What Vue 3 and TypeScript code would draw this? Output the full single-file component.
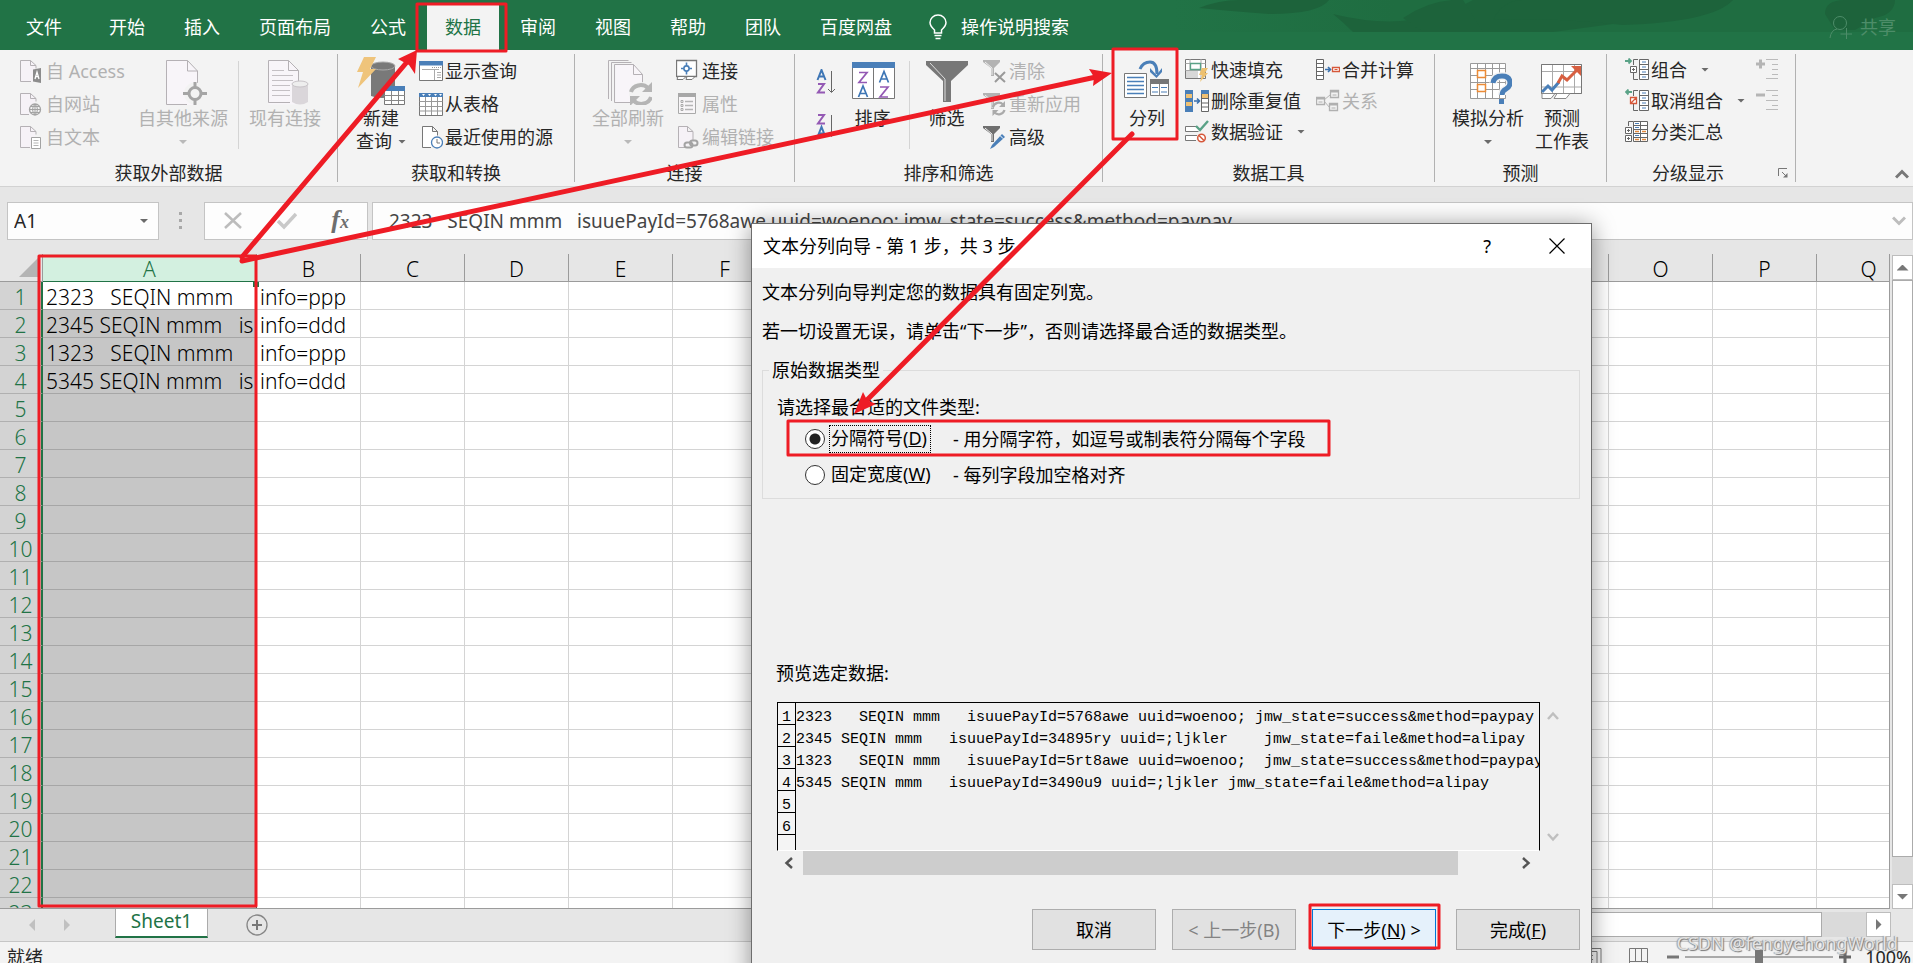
<script setup lang="ts">
import { ref } from 'vue'

interface Tool {
  icon: string
  label: string
  disabled?: boolean
  arrow?: boolean
}

const tabsBefore: string[] = ['开始', '插入', '页面布局', '公式', '数据', '审阅', '视图', '帮助', '团队', '百度网盘']
const activeTab = ref('数据')

const external: Tool[] = [
  { icon: 'access', label: '自 Access', disabled: true },
  { icon: 'web', label: '自网站', disabled: true },
  { icon: 'text', label: '自文本', disabled: true },
]
const transform: Tool[] = [
  { icon: 'showquery', label: '显示查询' },
  { icon: 'fromtable', label: '从表格' },
  { icon: 'recent', label: '最近使用的源' },
]
const connections: Tool[] = [
  { icon: 'conn', label: '连接' },
  { icon: 'props', label: '属性', disabled: true },
  { icon: 'links', label: '编辑链接', disabled: true },
]
const filters: Tool[] = [
  { icon: 'clear', label: '清除', disabled: true },
  { icon: 'reapply', label: '重新应用', disabled: true },
  { icon: 'advanced', label: '高级' },
]
const dataTools: Tool[] = [
  { icon: 'flash', label: '快速填充' },
  { icon: 'dedupe', label: '删除重复值' },
  { icon: 'validate', label: '数据验证', arrow: true },
]
const dataTools2: Tool[] = [
  { icon: 'consolidate', label: '合并计算' },
  { icon: 'relations', label: '关系', disabled: true },
]
const outline: Tool[] = [
  { icon: 'group', label: '组合', arrow: true },
  { icon: 'ungroup', label: '取消组合', arrow: true },
  { icon: 'subtotal', label: '分类汇总' },
]

const columns: string[] = 'ABCDEFGHIJKLMNOPQ'.split('')
const rowCount = 23
const cells: Record<string, string> = {
  A1: '2323   SEQIN mmm',
  A2: '2345 SEQIN mmm   is',
  A3: '1323   SEQIN mmm',
  A4: '5345 SEQIN mmm   is',
  B1: 'info=ppp',
  B2: 'info=ddd',
  B3: 'info=ppp',
  B4: 'info=ddd',
}
const nameBox = ref('A1')
const formula = ref('2323   SEQIN mmm   isuuePayId=5768awe uuid=woenoo; jmw_state=success&method=paypay')
const fileType = ref('delimited')
const zoom = ref(50)

const preview: string[] = [
  '2323   SEQIN mmm   isuuePayId=5768awe uuid=woenoo; jmw_state=success&method=paypay',
  '2345 SEQIN mmm   isuuePayId=34895ry uuid=;ljkler    jmw_state=faile&method=alipay',
  '1323   SEQIN mmm   isuuePayId=5rt8awe uuid=woenoo;  jmw_state=success&method=paypay',
  '5345 SEQIN mmm   isuuePayId=3490u9 uuid=;ljkler jmw_state=faile&method=alipay',
  '',
  '',
]
</script>

<template>
  <svg class="sprite" aria-hidden="true">
    <symbol id="i-access" viewBox="0 0 24 24">
      <path d="M1 1.500h9l5 5v16H1z" fill="#f6f2f7" /><path d="M11 22.500H.5v-21h10l5.500 5v3M10.500 1.500v5H16" fill="none" stroke="#b5b1b5" />
      <path d="M13 10.500l8-1.500v15l-8-1.500z" fill="#8c8c8c" /><path d="M15 20l2-7 2 7m-3.200-2.300h2.500" fill="none" stroke="#fff" stroke-width="1.300" />
    </symbol>
    <symbol id="i-web" viewBox="0 0 24 24">
      <path d="M1 1.500h9l5 5v16H1z" fill="#f6f2f7" /><path d="M9 22.500H.5v-21h10l5.500 5v3M10.500 1.500v5H16" fill="none" stroke="#b5b1b5" />
      <circle cx="15" cy="17.500" r="5.500" fill="#f3f3f3" stroke="#a3a3a3" stroke-width="1.300" /><path d="M15 12v11M9.500 17.500h11M10.500 14.500h9M10.500 20.500h9M15 12q-5 5.500 0 11q5-5.500 0-11" fill="none" stroke="#a3a3a3" />
    </symbol>
    <symbol id="i-text" viewBox="0 0 24 24">
      <path d="M1 1.500h9l5 5v16H1z" fill="#f6f2f7" /><path d="M10 22.500H.5v-21h10l5.500 5v3M10.500 1.500v5H16" fill="none" stroke="#b5b1b5" />
      <path d="M11.500 12.500h9v11h-9z" fill="#fff" stroke="#a3a3a3" /><path d="M13.500 15.500h5M13.500 18h5M13.500 20.500h5" stroke="#b5b5b5" />
    </symbol>
    <symbol id="i-showquery" viewBox="0 0 24 24">
      <path d="M.5 2.500h23v19H.5z" fill="#fff" stroke="#777" /><path d="M0 2h24v4.500H0z" fill="#4a7fb8" />
      <path d="M15.500 11v10M18 13.500h4M18 16h4M18 18.500h4M3 10.500h17" fill="none" stroke="#aaa" /><path d="M13 8.500h9" stroke="#999" stroke-dasharray="1 1" />
    </symbol>
    <symbol id="i-fromtable" viewBox="0 0 24 24">
      <path d="M.5 1.500h23v22H.5z" fill="#fff" stroke="#777" /><path d="M.5 9.500h23M.5 14.500h23M.5 19h23M6.500 4v19M12.500 4v19M18.500 4v19" stroke="#999" fill="none" />
      <path d="M0 1h24v4H0z" fill="#4a7fb8" /><path d="M3 2h3l-1.500 2zM9 2h3l-1.500 2zM15 2h3l-1.500 2zM20 2h3l-1.500 2z" fill="#fff" />
    </symbol>
    <symbol id="i-recent" viewBox="0 0 24 24">
      <path d="M12 22.500H3.500v-21h10l5 5v4M13.500 1.500v5h5" fill="#fff" stroke="#777" />
      <circle cx="18" cy="17.500" r="5.500" fill="#fff" stroke="#4a7fb8" stroke-width="1.300" /><path d="M18 14v4h3" fill="none" stroke="#777" />
    </symbol>
    <symbol id="i-conn" viewBox="0 0 24 24">
      <path d="M.5 1.500h20v16H.5z" fill="#fff" stroke="#777" stroke-width="1.300" /><path d="M2 17.500h8l-3 3H1zM11 17.500h8l-3 3h-6z" fill="#fff" stroke="#777" />
      <path d="M10.500 3.500v12M5 9.500h11" stroke="#4a7fb8" stroke-width="1.600" /><circle cx="10.500" cy="9.500" r="2.600" fill="#fff" stroke="#4a7fb8" stroke-width="1.600" />
    </symbol>
    <symbol id="i-props" viewBox="0 0 24 24">
      <path d="M2.500 1.500h17v20h-17z" fill="#f8f6f8" stroke="#aaa" /><path d="M2 1h18v4H2z" fill="#a8a8a8" />
      <path d="M9 9.500h8M9 13.500h8M9 17.500h8" stroke="#b5b5b5" stroke-width="1.300" /><path d="M5 8.500h2v2H5zM5 12.500h2v2H5zM5 16.500h2v2H5z" fill="none" stroke="#aaa" />
    </symbol>
    <symbol id="i-links" viewBox="0 0 24 24">
      <path d="M9 22.500H2.500v-21h9l5.500 5v9M11.500 1.500v5H17" fill="#f6f2f7" stroke="#b5b1b5" />
      <g fill="none" stroke="#a3a3a3" stroke-width="2"><rect x="8.500" y="17.500" width="8" height="5" rx="2.500" /><rect x="14" y="15.500" width="7.500" height="5" rx="2.500" /></g>
    </symbol>
    <symbol id="i-clear" viewBox="0 0 24 24">
      <path d="M0 1h17v2l-6 6v8H8V9L0 3z" fill="#b3b3b3" /><path d="M2 3l7 6v7" fill="none" stroke="#eee" /><path d="M12 14l10 9M22 13l-10 10" stroke="#999" stroke-width="2" />
    </symbol>
    <symbol id="i-reapply" viewBox="0 0 24 24">
      <path d="M0 1h17v2l-6 6v8H8V9L0 3z" fill="#b3b3b3" /><path d="M2 3l7 6v7" fill="none" stroke="#eee" />
      <path d="M10 15a6 6 0 0 1 10-2.500M21.500 18a6 6 0 0 1-10 2.500" fill="none" stroke="#aaa" stroke-width="2.300" /><path d="M22 9v6h-6zM9.500 24v-6h6z" fill="#aaa" />
    </symbol>
    <symbol id="i-advanced" viewBox="0 0 24 24">
      <path d="M0 1h17v2l-6 6v8H8V9L0 3z" fill="#6f6f6f" /><path d="M2 3l7 6v7" fill="none" stroke="#eee" /><path d="M7 24l2-4L19 9l3 3L11 22z" fill="#4a7fb8" /><path d="M17 10.500l3.200 3.200" stroke="#fff" />
    </symbol>
    <symbol id="i-flash" viewBox="0 0 24 24">
      <path d="M.5 1.500h20v19H.5z" fill="#fff" stroke="#777" /><path d="M.5 5.500h20M.5 12.500h20M5 1v19M16 1v19" stroke="#aaa" /><path d="M1 13h12v7H1z" fill="#d8d8d8" />
      <path d="M5.500 5.500h10v6h-10z" fill="#fff" stroke="#5aa287" stroke-width="1.300" /><path d="M17 10h6l-3 5h3l-8 9 2-7h-3z" fill="#edc06f" />
    </symbol>
    <symbol id="i-dedupe" viewBox="0 0 24 24">
      <path d="M0 1h8v22H0z" fill="#4a7fb8" /><path d="M1 5h6v4H1zM1 13h6v4H1z" fill="#f0c173" />
      <path d="M16.500 1.500h7v21h-7zM16 9.500h8M16 14h8M16 18h8" fill="#fff" stroke="#666" /><path d="M16 1h8v4h-8z" fill="#4a7fb8" /><path d="M17 5h6v4h-6z" fill="#f0c173" />
      <path d="M9 12h5M12 9.500l2.500 2.500-2.500 2.500" fill="none" stroke="#3a70ad" stroke-width="1.600" />
    </symbol>
    <symbol id="i-validate" viewBox="0 0 24 24">
      <path d="M12 6.500H.5v5h13M12 15.500H.5v5H11" fill="#fff" stroke="#777" /><path d="M11 6l4 4 8-9" fill="none" stroke="#5aa287" stroke-width="2.400" />
      <circle cx="16.500" cy="18" r="3.800" fill="#fff" stroke="#d6583a" stroke-width="1.500" /><path d="M14 15.500l5 5" stroke="#d6583a" stroke-width="1.500" />
    </symbol>
    <symbol id="i-consolidate" viewBox="0 0 24 24">
      <path d="M.5 1.500h7v20h-7zM.5 5.500h7M.5 9.500h7M.5 13.500h7M.5 17.500h7" fill="#fff" stroke="#666" />
      <path d="M9 11.500h5M12 9l2.500 2.500-2.500 2.500" fill="none" stroke="#3a70ad" stroke-width="1.600" /><path d="M16.500 9.500h7v4h-7z" fill="#fff" stroke="#d6583a" stroke-width="1.300" /><path d="M18.500 11.500h3" stroke="#d6583a" />
    </symbol>
    <symbol id="i-relations" viewBox="0 0 24 24">
      <path d="M8 11l6-5M8 12l6 7" stroke="#b5b5b5" /><g fill="#f3f3f3" stroke="#b0b0b0" stroke-width="1.300"><path d="M.5 8.500h8v7h-8zM14.500 1.500h8v7h-8zM13.500 14.500h8v7h-8z" /></g>
      <path d="M0 8h9v2.500H0zM14 1h9v2.500h-9zM13 14h9v2.500h-9z" fill="#b0b0b0" /><path d="M2.500 13h4M16.500 6h4M15.500 19h4" stroke="#b0b0b0" />
    </symbol>
    <symbol id="i-group" viewBox="0 0 24 24">
      <path d="M14.500 1.500h9v20h-9zM14 6.500h10M14 11.500h10M14 16.500h10" fill="#fff" stroke="#666" /><path d="M17 4h4M17 9h4M17 14h4M17 19h4" stroke="#4a7fb8" stroke-width="1.200" />
      <path d="M13 1.500H8.500V7M8.500 15v6.500H13" fill="none" stroke="#666" /><path d="M5.500 8.500h6v6h-6zM7 11.500h3M8.500 10v3" fill="#fff" stroke="#666" />
      <path d="M0 3h6M3.500 .5L6 3 3.500 5.500" fill="none" stroke="#5aa287" stroke-width="1.800" />
    </symbol>
    <symbol id="i-ungroup" viewBox="0 0 24 24">
      <path d="M14.500 1.500h9v20h-9zM14 6.500h10M14 11.500h10M14 16.500h10" fill="#fff" stroke="#666" /><path d="M17 4h4M17 9h4M17 14h4M17 19h4" stroke="#4a7fb8" stroke-width="1.200" />
      <path d="M13 1.500H8.500V7M8.500 15v6.500H13" fill="none" stroke="#666" /><path d="M5.500 8.500h6v6h-6zM6 14l5-5" fill="#fff" stroke="#d6583a" stroke-width="1.300" />
      <path d="M7 3H1M3.500 .5L1 3l2.500 2.500" fill="none" stroke="#5aa287" stroke-width="1.800" />
    </symbol>
    <symbol id="i-subtotal" viewBox="0 0 24 24">
      <path d="M8.500 1.500h14v20h-14zM8 5.500h15M8 9.500h15M8 13.500h15M8 17.500h15M15.500 1v21" fill="#fff" stroke="#666" /><path d="M10 3.500h4M10 7.500h4M10 15.500h4" stroke="#4a7fb8" stroke-width="1.200" />
      <path d="M10 11.500h4M17 11.500h4M10 19.500h4M17 19.500h4" stroke="#e58a3c" stroke-width="1.400" /><path d="M8 1.500H3.500V6" fill="none" stroke="#666" />
      <path d="M.5 7.500h6v6h-6zM2 10.500h3M3.500 9v3M.5 15.500h6v6h-6zM2 18.500h3M3.500 17v3" fill="#fff" stroke="#666" />
    </symbol>

    <symbol id="i-othersource" viewBox="0 0 48 48">
      <path d="M7.500 3.500h20l11 11v34h-31z" fill="#f8f5f9" stroke="none" /><path d="M28 47.500H7.500v-44h21L38.500 14v15M28.500 3.500V14h10" fill="none" stroke="#b5b1b5" />
      <circle cx="36" cy="36.500" r="11" fill="#f3f3f3" /><circle cx="36" cy="36.500" r="6" fill="none" stroke="#a5a5a5" stroke-width="3" /><path d="M36 25v7M36 41v8M24 36.500h7M41 36.500h7" stroke="#a5a5a5" stroke-width="3" />
    </symbol>
    <symbol id="i-existing" viewBox="0 0 48 48">
      <path d="M7.500 3.500h20l10 10v34h-30z" fill="#f8f5f9" stroke="none" /><path d="M29 45.500H7.500v-42h20l10 10v11M27.500 3.500v10h10" fill="none" stroke="#b5b1b5" />
      <path d="M11 13.500h12M11 18.500h21M11 23.500h21M11 28.500h18M11 33.500h18M11 38.500h18" stroke="#c4c0c4" /><path d="M31 27v18q8 5 16 0V27z" fill="#dad6da" /><ellipse cx="39" cy="27" rx="8" ry="3" fill="#eee" stroke="#c8c4c8" />
    </symbol>
    <symbol id="i-newquery" viewBox="0 0 48 48">
      <path d="M14 9v30q10 4 24 0V9z" fill="#797979" /><ellipse cx="26" cy="9" rx="12" ry="4" fill="#797979" stroke="#aaa" />
      <path d="M7 0h12l-6 12h6L1 31l5-16H0z" fill="#efc47b" /><path d="M27.500 29.500h20v18h-20z" fill="#fff" stroke="#777" /><path d="M27 29h21v5H27z" fill="#4a7fb8" /><path d="M27 38.500h21M27 43.500h21M34.500 34v13M41.500 34v13" stroke="#888" />
    </symbol>
    <symbol id="i-refresh" viewBox="0 0 48 48">
      <path d="M4.500 42V3.500h20M7.500 44V5.500h20" fill="none" stroke="#b5b1b5" /><path d="M11.500 7.500h19l8 10v28h-27z" fill="#f8f5f9" /><path d="M26 45.500H10.500v-38h19l9 10V26M29.500 7.500v10h9" fill="none" stroke="#b5b1b5" />
      <circle cx="37" cy="37" r="12" fill="#f3f3f3" /><path d="M27 35a10 9 0 0 1 17-4M47 40a10 9 0 0 1-17 4" fill="none" stroke="#b5b5b5" stroke-width="4" /><path d="M48 25v10H38zM26 49V39h10z" fill="#b5b5b5" />
    </symbol>
    <symbol id="i-sort" viewBox="0 0 48 48">
      <path d="M3.500 8.500h42v33h-42z" fill="#fff" stroke="#777" /><path d="M3 5h43v6H3z" fill="#4a7fb8" /><path d="M24.500 11v31" stroke="#777" />
      <g fill="none" stroke-width="1.700"><path d="M10 15.500h8l-8 10h8M31 30h8l-8 10h8" stroke="#9459b4" /><path d="M9.500 40l4.500-11 4.500 11m-7-3.500h5M30.500 25.500l4.500-11 4.500 11m-7-3.500h5" stroke="#3e76b5" /></g>
    </symbol>
    <symbol id="i-filter" viewBox="0 0 48 48">
      <path d="M3 4h42v4L28 24v21h-8V24L3 8z" fill="#777" /><path d="M7 6l15 16v22" fill="none" stroke="#ddd" />
    </symbol>
    <symbol id="i-split" viewBox="0 0 48 48">
      <path d="M1.500 16.500h22v24h-22z" fill="#fff" stroke="#777" /><path d="M4 20.500h17M4 24.500h17M4 28.500h17M4 32.500h17M4 36.500h17" stroke="#4a7fb8" stroke-width="1.300" />
      <path d="M27.500 22.500h18v16h-18z" fill="#fff" stroke="#777" /><path d="M27 22h19v5H27z" fill="#777" /><path d="M36.500 27v11" stroke="#888" /><path d="M29 30.500h6M29 35h6M38 30.500h6M38 35h6" stroke="#4a7fb8" stroke-width="1.200" />
      <path d="M17 12q3-7 10-7 7 0 7 12" fill="none" stroke="#4a7fb8" stroke-width="3" /><path d="M27 11l6.500 7 5.500-7v4l-5.500 6-6.500-6z" fill="#4a7fb8" />
    </symbol>
    <symbol id="i-whatif" viewBox="-3 0 48 48">
      <path d="M3.500 6.500h35v35h-35zM3.500 11.500h35M3.500 18.500h35M3.500 25.500h35M3.500 32.500h35M10.500 6v36M18.500 6v36M25.500 6v36M32.500 6v36" fill="#fff" stroke="#9a9a9a" />
      <path d="M10.500 13.500h8v7h-8zM10.500 27.500h8v7h-8z" fill="#fff" stroke="#eb8b37" stroke-width="1.500" /><path d="M26 26q1-7 9-7 8 0 8 7 0 4-4 6-4 2-4 6" fill="none" stroke="#f3f3f3" stroke-width="8" />
      <path d="M26 26q1-7 9-7 8 0 8 7 0 4-4 6-4 2-4 6" fill="none" stroke="#4a7fb8" stroke-width="5" /><path d="M32 42h5v5h-5z" fill="#4a7fb8" />
    </symbol>
    <symbol id="i-forecast" viewBox="0 0 48 48">
      <path d="M3.500 7.500h40v29h-40zM3.500 14.500h40M3.500 30h40M14.500 8v28M25.500 8v28M36.500 8v28" fill="#fff" stroke="#aaa" /><path d="M3.500 7.500h40v29h-40z" fill="none" stroke="#777" />
      <path d="M4 36.500h13l-4 5H4zM19 36.500h13l-4 5h-12z" fill="#fff" stroke="#888" /><path d="M4 35l6-6 4 4 7-8" fill="none" stroke="#4a7fb8" stroke-width="3" /><path d="M20 26l4-7 5 4 11-11" fill="none" stroke="#d75f41" stroke-width="3" /><path d="M33 9h10v10l-3-3-5-5z" fill="#d75f41" />
    </symbol>
  </svg>

  <div class="app">
    <header class="tabbar">
      <svg class="pattern" width="740" height="32" aria-hidden="true">
        <defs><linearGradient id="fade"><stop offset="0" stop-color="#217346" /><stop offset=".3" stop-color="#1f6d41" /></linearGradient></defs>
        <rect width="740" height="32" fill="url(#fade)" />
        <g fill="#1d633b">
          <path d="M26 8q20-8 40-8h90q-10 14-60 14-40-3-70-6z" /><path d="M160 14q80 20 140-14h150q60 12-10 24l-60 8H180q-10-10-20-18z" />
          <path d="M230 18q30-20 60-18l20 32h-60z" /><path d="M320 20q10-20 30-20h210q-20 22-110 25-70-8-130-5z" /><path d="M652 14q0-14 20-14h50q0 14-20 18l-20 12h-20z" />
        </g>
      </svg>
      <nav class="tabs">
        <button class="tab file">文件</button>
        <button v-for="t in tabsBefore" :key="t" class="tab" :class="{ active: t === activeTab }" @click="activeTab = t">{{ t }}</button>
      </nav>
      <button class="tell">
        <svg width="18" height="26" viewBox="0 0 18 26"><path d="M5.500 19v-3Q1 12 1 8.500a8 7.500 0 0 1 16 0Q17 12 12.500 16v3zM5.500 21.500h7M6.500 24.500h5" fill="none" stroke="#fff" stroke-width="1.500" /></svg>
        操作说明搜索
      </button>
      <button class="share">
        <svg width="24" height="24" viewBox="0 0 24 24"><circle cx="11" cy="8" r="6.500" fill="none" stroke="currentColor" /><path d="M1 23q1-8 7-9m3.500 5H23M17.500 13v11" fill="none" stroke="currentColor" /></svg>
        共享
      </button>
    </header>

    <section class="ribbon">
      <div class="group g1">
        <div class="body">
          <div class="stack">
            <button v-for="b in external" :key="b.icon" class="small" :disabled="b.disabled"><svg class="i24"><use :href="'#i-' + b.icon" /></svg>{{ b.label }}</button>
          </div>
          <button class="big" disabled><svg class="i48"><use href="#i-othersource" /></svg><span>自其他来源</span><i class="caret"></i></button>
          <i class="sep"></i>
          <button class="big" disabled><svg class="i48"><use href="#i-existing" /></svg><span>现有连接</span></button>
        </div>
        <div class="label">获取外部数据</div>
      </div>
      <div class="group g2">
        <div class="body">
          <button class="big"><svg class="i48"><use href="#i-newquery" /></svg><span>新建</span><span class="with-caret">查询<i class="caret"></i></span></button>
          <div class="stack">
            <button v-for="b in transform" :key="b.icon" class="small"><svg class="i24"><use :href="'#i-' + b.icon" /></svg>{{ b.label }}</button>
          </div>
        </div>
        <div class="label">获取和转换</div>
      </div>
      <div class="group g3">
        <div class="body">
          <button class="big" disabled><svg class="i48"><use href="#i-refresh" /></svg><span>全部刷新</span><i class="caret"></i></button>
          <div class="stack">
            <button v-for="b in connections" :key="b.icon" class="small" :disabled="b.disabled"><svg class="i24"><use :href="'#i-' + b.icon" /></svg>{{ b.label }}</button>
          </div>
        </div>
        <div class="label">连接</div>
      </div>
      <div class="group g4">
        <div class="body">
          <div class="sorts">
            <button aria-label="升序"><svg width="20" height="26" viewBox="0 0 20 26" fill="none"><path d="M1.500 11l4-10 4 10m-6.500-3.500h5" stroke="#3e76b5" stroke-width="2" /><path d="M2 15h6l-6 8.500h7" stroke="#9459b4" stroke-width="2" /><path d="M15.500 2v21M12 20l3.500 3.500L19 20" stroke="#666" /></svg></button>
            <button aria-label="降序"><svg width="20" height="26" viewBox="0 0 20 26" fill="none"><path d="M2 2h6l-6 8.500h7" stroke="#9459b4" stroke-width="2" /><path d="M1.500 24l4-10 4 10m-6.500-3.500h5" stroke="#3e76b5" stroke-width="2" /><path d="M15.500 2v21M12 20l3.500 3.500L19 20" stroke="#666" /></svg></button>
          </div>
          <button class="big"><svg class="i48"><use href="#i-sort" /></svg><span>排序</span></button>
          <i class="sep"></i>
          <button class="big"><svg class="i48"><use href="#i-filter" /></svg><span>筛选</span></button>
          <div class="stack">
            <button v-for="b in filters" :key="b.icon" class="small" :disabled="b.disabled"><svg class="i24"><use :href="'#i-' + b.icon" /></svg>{{ b.label }}</button>
          </div>
        </div>
        <div class="label">排序和筛选</div>
      </div>
      <div class="group g5">
        <div class="body">
          <button class="big"><svg class="i48"><use href="#i-split" /></svg><span>分列</span></button>
          <div class="stack tight">
            <button v-for="b in dataTools" :key="b.icon" class="small"><svg class="i24"><use :href="'#i-' + b.icon" /></svg>{{ b.label }}<i v-if="b.arrow" class="caret"></i></button>
          </div>
          <div class="stack tight">
            <button v-for="b in dataTools2" :key="b.icon" class="small" :disabled="b.disabled"><svg class="i24"><use :href="'#i-' + b.icon" /></svg>{{ b.label }}</button>
          </div>
        </div>
        <div class="label">数据工具</div>
      </div>
      <div class="group g6">
        <div class="body">
          <button class="big"><svg class="i48"><use href="#i-whatif" /></svg><span>模拟分析</span><i class="caret"></i></button>
          <button class="big"><svg class="i48"><use href="#i-forecast" /></svg><span>预测</span><span>工作表</span></button>
        </div>
        <div class="label">预测</div>
      </div>
      <div class="group g7">
        <div class="body">
          <div class="stack tight">
            <button v-for="b in outline" :key="b.icon" class="small"><svg class="i24"><use :href="'#i-' + b.icon" /></svg>{{ b.label }}<i v-if="b.arrow" class="caret"></i></button>
          </div>
          <div class="stack tight detail">
            <button class="small" disabled aria-label="显示明细数据"><svg class="i24" viewBox="0 0 24 24"><path d="M0 6h9M4.500 1.500v9" stroke="#b5b5b5" stroke-width="3" /><path d="M10 1.500h12M16 6.500h6M16 11.500h6M16 16.500h6M10 20.500h12" stroke="#bbb" /></svg></button>
            <button class="small" disabled aria-label="隐藏明细数据"><svg class="i24" viewBox="0 0 24 24"><path d="M0 6h9" stroke="#b5b5b5" stroke-width="3" /><path d="M10 1.500h12M16 6.500h6M10 11.500h12M16 16.500h6M10 20.500h12" stroke="#bbb" /></svg></button>
          </div>
        </div>
        <div class="label launch">分级显示<button class="launcher" aria-label="分级显示设置"><svg width="10" height="10" viewBox="0 0 10 10"><path d="M.5 8V.5H9M4 4l4 4" fill="none" stroke="#777" /><path d="M9.500 5v4.500H5z" fill="#777" /></svg></button></div>
      </div>
      <button class="collapse" aria-label="折叠功能区"><svg width="14" height="10" viewBox="0 0 14 10"><path d="M1 8.500l6-6 6 6" fill="none" stroke="#777" stroke-width="3" /></svg></button>
    </section>

    <section class="formulabar">
      <div class="namebox"><input v-model="nameBox" aria-label="名称框" /><i class="caret"></i></div>
      <div class="dots"><i></i><i></i><i></i></div>
      <div class="fxbox">
        <button aria-label="取消输入"><svg width="20" height="18" viewBox="0 0 20 18"><path d="M2 1l16 15M18 1L2 16" stroke="#bcbcbc" stroke-width="2.500" /></svg></button>
        <button aria-label="输入"><svg width="20" height="18" viewBox="0 0 20 18"><path d="M1 9l6 6L19 2" fill="none" stroke="#c9c9c9" stroke-width="3.500" /></svg></button>
        <button class="fx" aria-label="插入函数"><i>f</i><i class="x">x</i></button>
      </div>
      <div class="formula">
        <input v-model="formula" aria-label="编辑栏" />
        <svg width="14" height="10" viewBox="0 0 14 10"><path d="M1 1.500l6 6 6-6" fill="none" stroke="#bdbdbd" stroke-width="3" /></svg>
      </div>
    </section>

    <main class="sheet">
      <div class="gridwrap">
        <table>
          <colgroup><col class="c-head" /><col class="c-a" /><col v-for="c in columns.slice(1)" :key="c" class="c-n" /></colgroup>
          <thead>
            <tr>
              <th class="corner"><svg width="19" height="19" viewBox="0 0 19 19"><path d="M19 0v19H0z" fill="#b4b4b4" /></svg></th>
              <th v-for="c in columns" :key="c" :class="{ sel: c === 'A' }">{{ c }}</th>
            </tr>
          </thead>
          <tbody>
            <tr v-for="r in rowCount" :key="r">
              <th>{{ r }}</th>
              <td v-for="c in columns" :key="c" :class="{ sel: c === 'A', cur: c + r === 'A1' }">{{ cells[c + r] }}</td>
            </tr>
          </tbody>
        </table>
        <i class="handle"></i>
      </div>
      <div class="vscroll">
        <button aria-label="向上滚动"><i class="tri up"></i></button>
        <div class="track"><div class="thumb"></div></div>
        <button aria-label="向下滚动"><i class="tri down"></i></button>
      </div>
    </main>

    <footer class="sheetbar">
      <button class="nav" aria-label="上一个工作表"><i class="tri left"></i></button>
      <button class="nav" aria-label="下一个工作表"><i class="tri right"></i></button>
      <button class="sheettab">Sheet1</button>
      <button class="add" aria-label="新工作表"><svg width="22" height="22" viewBox="0 0 22 22"><circle cx="11" cy="11" r="10" fill="none" stroke="#868686" stroke-width="1.300" /><path d="M6 11h10M11 6v10" stroke="#777" stroke-width="2" /></svg></button>
      <div class="hscroll"><div class="hthumb"></div><div class="htrack"></div><button aria-label="向右滚动"><i class="tri right"></i></button></div>
    </footer>
    <div class="status">
      <span>就绪</span>
      <div class="zoombar">
        <svg width="26" height="20" viewBox="0 0 26 20"><path d="M1 1.500h23v22H1M1 4.500h19v19M1 8.500h15M1 12.500h15M1 16.500h15" fill="none" stroke="#777" /></svg>
        <svg class="brk" width="20" height="20" viewBox="0 0 20 20"><path d="M.5 24V1.500h18V24M6.500 1v13M12.500 1v13M0 14.500h19" fill="none" stroke="#777" /></svg>
        <button aria-label="缩小"><svg width="12" height="12" viewBox="0 0 12 12"><path d="M0 6h12" stroke="#777" stroke-width="3" /></svg></button>
        <input v-model="zoom" type="range" min="0" max="100" aria-label="显示比例" />
        <button aria-label="放大"><svg width="12" height="12" viewBox="0 0 12 12"><path d="M0 6h12M6 0v12" stroke="#666" stroke-width="3" /></svg></button>
        <span class="pct">100%</span>
      </div>
    </div>

    <div class="dialog" role="dialog" aria-labelledby="dlg-title">
      <div class="titlebar">
        <span id="dlg-title">文本分列向导 - 第 1 步，共 3 步</span>
        <button class="help">?</button>
        <button aria-label="关闭"><svg width="16" height="16" viewBox="0 0 16 16"><path d="M.5 .5l15 15M15.500 .5l-15 15" stroke="#000" stroke-width="1.200" /></svg></button>
      </div>
      <div class="content">
        <p>文本分列向导判定您的数据具有固定列宽。</p>
        <p>若一切设置无误，请单击“下一步”，否则请选择最合适的数据类型。</p>
        <fieldset>
          <legend>原始数据类型</legend>
          <p class="prompt">请选择最合适的文件类型:</p>
          <div class="option">
            <input id="opt-d" v-model="fileType" type="radio" name="ftype" value="delimited" />
            <label for="opt-d" class="focus">分隔符号(<u>D</u>)</label>
            <span>- 用分隔字符，如逗号或制表符分隔每个字段</span>
          </div>
          <div class="option">
            <input id="opt-w" v-model="fileType" type="radio" name="ftype" value="fixed" />
            <label for="opt-w">固定宽度(<u>W</u>)</label>
            <span>- 每列字段加空格对齐</span>
          </div>
        </fieldset>
        <p class="pvlabel">预览选定数据:</p>
        <div class="pv">
          <div class="pvbox">
            <div v-for="(line, i) in preview" :key="i" class="pvrow"><b>{{ i + 1 }}</b><span>{{ line }}</span></div>
            <div class="pvrow"><b></b><span></span></div>
          </div>
          <div class="pvv">
            <svg width="12" height="10" viewBox="0 0 12 10"><path d="M1 8l5-5.500L11 8" fill="none" stroke="#bfbfbf" stroke-width="2.500" /></svg>
            <svg width="12" height="10" viewBox="0 0 12 10"><path d="M1 2l5 5.500L11 2" fill="none" stroke="#bfbfbf" stroke-width="2.500" /></svg>
          </div>
        </div>
        <div class="pvh">
          <svg width="10" height="12" viewBox="0 0 10 12"><path d="M8 1L2.500 6 8 11" fill="none" stroke="#555" stroke-width="2.500" /></svg>
          <div class="bar"></div>
          <svg width="10" height="12" viewBox="0 0 10 12"><path d="M2 1l5.500 5L2 11" fill="none" stroke="#555" stroke-width="2.500" /></svg>
        </div>
        <div class="actions">
          <button>取消</button>
          <button disabled>&lt; 上一步(B)</button>
          <button class="primary">下一步(<u>N</u>) &gt;</button>
          <button>完成(<u>F</u>)</button>
        </div>
      </div>
    </div>

    <svg class="marks" aria-hidden="true">
      <g fill="none" stroke="#ee1c25" stroke-width="3" stroke-linejoin="round">
        <rect x="417" y="4" width="89" height="47" /><rect x="1113" y="49" width="64" height="90" /><rect x="39" y="256" width="217" height="650" />
        <rect x="788" y="421" width="541" height="34" /><rect x="1310" y="905" width="129" height="43" />
      </g>
      <g stroke="#ee1c25" stroke-width="5" stroke-linecap="round"><path d="M242 257L407 62" /><path d="M242 261L1096 77" /><path d="M1132 134L867 400" /></g>
      <g fill="#ee1c25"><path d="M417 50l-2 24-6-9-11-6z" /><path d="M1112 73l-19 13 1-9-5-8z" /><path d="M854 414l9-22 4 8 9 4z" /></g>
    </svg>
    <div class="mark-text">CSDN @fengyehongWorld</div>
  </div>
</template>

<style>
html,
body {
  margin: 0;
  overflow: hidden;
}
</style>

<style scoped>
* {
  box-sizing: border-box;
}
.sprite {
  position: absolute;
  width: 0;
  height: 0;
}
.app {
  position: relative;
  display: flex;
  flex-direction: column;
  height: 100vh;
  overflow: hidden;
  background: #e6e6e6;
  color: #262626;
  font-family: "Noto Sans", "Noto Sans CJK SC", sans-serif;
  font-size: 18px;
  line-height: 24px;
}
button,
input {
  margin: 0;
  padding: 0;
  border: 0;
  background: none;
  color: inherit;
  font: inherit;
}
button {
  white-space: nowrap;
}
svg {
  flex: none;
  display: block;
}
p {
  margin: 0;
}
.tabbar {
  position: relative;
  flex: none;
  display: flex;
  height: 50px;
  background: #217346;
  color: #fff;
}
.pattern {
  position: absolute;
  top: 0;
  right: 0;
}
.tabs {
  display: flex;
  gap: 3px;
  padding-top: 5px;
}
.tab {
  height: 45px;
  padding: 0 18px 2px;
}
.tab.file {
  width: 88px;
}
.tab.active {
  background: #f3f3f3;
  color: #217346;
}
.tab,
.tell,
.share {
  line-height: 34px;
}
.tell,
.share {
  position: relative;
  display: flex;
  align-items: center;
  height: 44px;
}
.tell {
  gap: 14px;
  margin-left: 19px;
  padding-top: 9px;
}
.share {
  gap: 7px;
  margin-left: auto;
  margin-right: 17px;
  padding-top: 10px;
  color: #4d8d69;
}
.ribbon {
  flex: none;
  display: flex;
  align-items: flex-start;
  height: 137px;
  padding-top: 4px;
  background: #f3f3f3;
  border-bottom: 1px solid #d2d2d2;
}
.group {
  flex: none;
  display: flex;
  flex-direction: column;
  height: 128px;
  border-right: 1px solid #b1b1b1;
}
.body {
  flex: none;
  display: flex;
  height: 108px;
}
.label {
  line-height: 22px;
  text-align: center;
}
.g1 { width: 338px; }
.g2 { width: 237px; }
.g3 { width: 220px; }
.g4 { width: 308px; }
.g5 { width: 332px; }
.g6 { width: 172px; }
.g7 { width: 189px; }
.g1 .body { padding-left: 20px; gap: 10px; }
.g2 .body { padding-left: 17px; gap: 12px; }
.g3 .body { padding-left: 17px; gap: 12px; }
.g4 .body { padding-left: 21px; gap: 15px; }
.g5 .body { padding-left: 21px; gap: 15px; }
.g6 .body { padding-left: 17px; gap: 11px; }
.g7 .body { padding-left: 18px; }
.g1 .stack { width: 108px; }
.g5 .stack { width: 116px; }
.g7 .stack { width: 131px; }
.g7 .detail { width: 24px; }
.stack {
  flex: none;
  display: flex;
  flex-direction: column;
  align-items: flex-start;
}
.small {
  display: flex;
  align-items: center;
  gap: 2px;
  height: 33px;
}
.tight .small {
  height: 31px;
}
.small .caret {
  margin-left: 12px;
}
.i24 {
  width: 24px;
  height: 24px;
}
.i48 {
  width: 48px;
  height: 48px;
  margin: 0 -8px 2px;
}
.big {
  display: flex;
  flex-direction: column;
  align-items: center;
  padding-top: 3px;
  line-height: 23px;
}
.g2 .big { width: 52px; }
.g4 .big { width: 43px; }
.g5 .big { width: 46px; }
.big > .caret {
  margin-top: 10px;
}
.with-caret {
  display: flex;
  align-items: center;
  gap: 6px;
}
button:disabled {
  color: #b1b1b1;
}
.caret {
  flex: none;
  width: 8px;
  height: 4px;
  background: #6a6a6a;
  clip-path: polygon(0 0, 100% 0, 50% 100%);
}
:disabled .caret {
  background: #b9b9b9;
}
.sep {
  width: 1px;
  height: 88px;
  margin-top: 7px;
  background: #d4d4d4;
}
.sorts {
  display: flex;
  flex-direction: column;
  gap: 18px;
  padding-top: 15px;
}
.launch {
  display: flex;
  justify-content: flex-end;
  align-items: center;
  gap: 54px;
  padding-right: 7px;
}
.launcher {
  height: 10px;
}
.collapse {
  margin: 115px 4px 0 auto;
}
.formulabar {
  flex: none;
  display: flex;
  height: 67px;
  padding: 15px 0 14px 7px;
}
.namebox,
.fxbox,
.formula {
  display: flex;
  align-items: center;
  height: 38px;
  background: #fdfdfd;
  border: 1px solid #c4c4c4;
}
.namebox {
  width: 152px;
  padding: 0 10px 0 6px;
}
.namebox input {
  flex: 1;
  min-width: 0;
  font-size: 19px;
}
.dots {
  display: flex;
  flex-direction: column;
  gap: 4px;
  padding: 10px 22px 0 20px;
}
.dots i {
  width: 3px;
  height: 3px;
  background: #a8a8a8;
}
.fxbox {
  width: 164px;
  padding: 0 18px;
  justify-content: space-between;
}
.fx {
  font-family: "Liberation Serif", serif;
  font-size: 26px;
  font-weight: bold;
  color: #6e6e6e;
}
.fx .x {
  font-size: 18px;
}
.formula {
  flex: 1;
  margin-left: 4px;
  padding: 0 6px 0 16px;
  color: #444;
}
.formula input {
  flex: 1;
  min-width: 0;
  font-size: 19px;
}
.sheet {
  flex: 1;
  min-height: 0;
  display: flex;
}
.gridwrap {
  position: relative;
  flex: 1;
  min-width: 0;
  overflow: hidden;
  border-right: 1px solid #9b9b9b;
  border-bottom: 1px solid #9b9b9b;
}
table {
  width: 1921px;
  table-layout: fixed;
  border-collapse: separate;
  border-spacing: 0;
  font-size: 21px;
  font-weight: 300;
  color: #000;
}
.c-head { width: 43px; }
.c-a { width: 214px; }
.c-n { width: 104px; }
th,
td {
  height: 28px;
  padding: 4px 0 0;
  line-height: 23px;
  font-weight: 300;
  border-right: 1px solid #d4d4d4;
  border-bottom: 1px solid #d4d4d4;
  white-space: pre;
  overflow: hidden;
}
td {
  padding-left: 3px;
  background: #fff;
}
thead th {
  border-color: #9b9b9b;
  background: #e6e6e6;
}
thead .sel {
  background: #d3f0e0;
  border-bottom-color: #217346;
  color: #217346;
}
.corner {
  padding: 0 0 0 19px;
}
tbody th {
  background: #d3d3d3;
  border-color: #b0b0b0;
  border-right: 2px solid #217346;
  color: #217346;
}
td.sel {
  background: #c6c6c6;
  border-bottom-color: #a6a6a6;
  border-right-color: #217346;
}
td.cur {
  background: #fff;
}
.handle {
  position: absolute;
  left: 253px;
  top: 28px;
  width: 6px;
  height: 5px;
  background: #217346;
}
.vscroll {
  flex: none;
  display: flex;
  flex-direction: column;
  width: 23px;
  padding: 1px 0 0 2px;
}
.vscroll button {
  display: grid;
  place-items: center;
  height: 25px;
  background: #fff;
  border: 1px solid #bdbdbd;
}
.track {
  flex: 1;
  background: #dadada;
  padding-bottom: 27px;
}
.thumb {
  height: 100%;
  background: #fff;
  border: 1px solid #ababab;
}
.tri {
  width: 12px;
  height: 6px;
  background: #777;
}
.tri.up { clip-path: polygon(50% 0, 100% 100%, 0 100%); }
.tri.down { clip-path: polygon(0 0, 100% 0, 50% 100%); }
.tri.left,
.tri.right {
  width: 6px;
  height: 12px;
}
.tri.left { clip-path: polygon(100% 0, 100% 100%, 0 50%); }
.tri.right { clip-path: polygon(0 0, 100% 50%, 0 100%); }
.sheetbar {
  flex: none;
  display: flex;
  height: 33px;
  border-bottom: 1px solid #c6c6c6;
}
.nav {
  width: 6px;
  margin-left: 29px;
}
.nav .tri {
  display: block;
  background: #c0c0c0;
}
.sheettab {
  width: 93px;
  height: 29px;
  margin-left: 45px;
  padding-bottom: 4px;
  background: #fff;
  border: 1px solid #ababab;
  border-top: 0;
  border-bottom: 2px solid #217346;
  color: #217346;
  font-size: 19px;
  line-height: 22px;
}
.add {
  margin-left: 38px;
}
.hscroll {
  display: flex;
  width: 1000px;
  height: 25px;
  margin: 3px 22px 0 auto;
}
.hthumb {
  flex: 1;
  background: #fff;
  border: 1px solid #ababab;
}
.htrack {
  width: 44px;
  background: #dadada;
}
.hscroll button {
  display: grid;
  place-items: center;
  width: 25px;
  background: #fff;
  border: 1px solid #bdbdbd;
}
.status {
  flex: none;
  display: flex;
  justify-content: space-between;
  height: 21px;
  padding-left: 7px;
  overflow: hidden;
  background: #f3f3f3;
  line-height: 30px;
}
.zoombar {
  display: flex;
  height: 30px;
  align-items: center;
}
.brk {
  margin: 0 18px 0 26px;
}
.zoombar button {
  width: 12px;
}
.zoombar input {
  appearance: none;
  width: 148px;
  height: 14px;
  margin: 0 6px;
  background: linear-gradient(#aaa, #aaa) center / 100% 2px no-repeat;
}
.zoombar input::-webkit-slider-thumb {
  appearance: none;
  width: 8px;
  height: 15px;
  background: #777;
}
.pct {
  padding: 0 2px 0 14px;
}
.dialog {
  position: absolute;
  left: 751px;
  top: 223px;
  width: 841px;
  height: 760px;
  background: #f0f0f0;
  border: 1px solid #6d6d6d;
  box-shadow: 0 2px 22px rgba(0, 0, 0, 0.4);
  color: #000;
}
.titlebar {
  display: flex;
  align-items: center;
  height: 44px;
  padding: 0 26px 0 11px;
  background: #fff;
}
.titlebar span {
  flex: 1;
}
.help {
  margin-right: 58px;
}
.content {
  padding: 5px 11px 0 10px;
}
.content > p {
  line-height: 39px;
}
fieldset {
  height: 141px;
  margin: 7px 0 0;
  padding: 11px 0 0 14px;
  border: 1px solid #dcdcdc;
}
legend {
  margin-left: -8px;
  padding: 0 3px;
}
.content fieldset .prompt {
  line-height: 28px;
}
.option {
  display: flex;
  align-items: center;
  height: 36px;
  padding-left: 28px;
}
.option input {
  appearance: none;
  width: 20px;
  height: 20px;
  background: #fff;
  border: 1px solid #333;
  border-radius: 50%;
}
.option input:checked {
  background: radial-gradient(#222 5px, #fff 6px);
}
.option label {
  width: 102px;
  height: 28px;
  margin: 0 22px 0 4px;
  padding-left: 1px;
  border: 1px solid transparent;
  white-space: nowrap;
}
.option .focus {
  border: 1px dotted #000;
}
.content > .pvlabel {
  margin: 155px 0 9px 14px;
}
.pv {
  display: flex;
  height: 149px;
  margin-left: 15px;
}
.pvbox {
  width: 763px;
  overflow: hidden;
  border: 1px solid #000;
  border-bottom-color: #fff;
}
.pvrow {
  display: flex;
  height: 22px;
  font-family: "Liberation Mono", monospace;
  font-size: 15px;
  line-height: 29px;
}
.pvrow b {
  flex: none;
  width: 18px;
  border-right: 1px solid #000;
  border-bottom: 1px solid #000;
  background: #f4f4f4;
  font-weight: 400;
  text-align: center;
}
.pvrow span {
  white-space: pre;
}
.pvv {
  display: flex;
  flex-direction: column;
  justify-content: space-between;
  padding: 9px 0 9px 7px;
}
.pvh {
  display: flex;
  align-items: center;
  height: 24px;
  width: 747px;
  margin-left: 22px;
}
.pvh .bar {
  width: 655px;
  height: 24px;
  margin: 0 auto 0 9px;
  background: #cdcdcd;
}
.actions {
  display: flex;
  justify-content: flex-end;
  gap: 16px;
  margin-top: 34px;
}
.actions button {
  width: 124px;
  height: 41px;
  background: #e1e1e1;
  border: 1px solid #adadad;
}
.actions button:disabled {
  color: #838383;
}
.actions .primary {
  margin-right: 4px;
  background: #e5f1fb;
  border-color: #0078d7;
}
.marks {
  position: absolute;
  left: 0;
  top: 0;
  width: 100%;
  height: 100%;
  pointer-events: none;
}
.mark-text {
  position: absolute;
  right: 15px;
  bottom: 8px;
  color: rgba(235, 235, 235, 0.9);
  text-shadow: 1px 1px 1px #777, -1px 0 1px #999;
  font-size: 18px;
  line-height: 24px;
}
</style>
